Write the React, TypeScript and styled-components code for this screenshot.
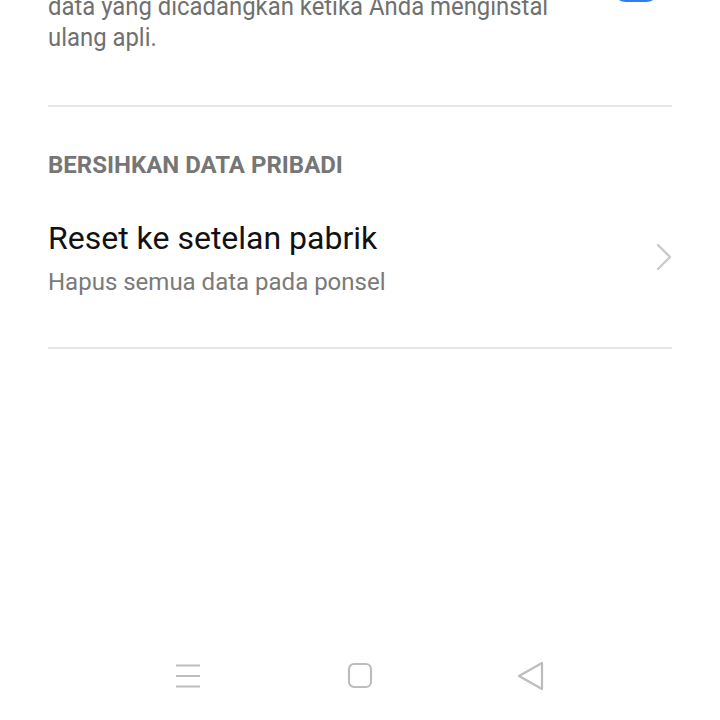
import React from 'react';
import styled, { createGlobalStyle } from 'styled-components';

const GlobalStyle = createGlobalStyle`
  html, body {
    margin: 0;
    padding: 0;
    background: #ffffff;
    font-family: Roboto, "Noto Sans", sans-serif;
    overflow: hidden;
  }
`;

const Screen = styled.div`
  width: 720px;
  height: 720px;
  display: flex;
  flex-direction: column;
  overflow: hidden;
`;

const Content = styled.div`
  flex: 1;
  display: flex;
  flex-direction: column;
  padding: 0 48px;
  margin-top: -40px;
`;

const ToggleRow = styled.div`
  display: flex;
  align-items: flex-start;
  justify-content: space-between;
  padding-bottom: 52px;
  border-bottom: 2px solid #e6e6e6;
`;

const Description = styled.p`
  margin: 0;
  font-size: 25px;
  line-height: 31px;
  color: #707070;
  white-space: nowrap;
  transform: scaleX(0.955);
  transform-origin: left center;
`;

const Toggle = styled.div`
  width: 48px;
  height: 28px;
  margin-top: 14px;
  margin-right: 12px;
  border-radius: 14px;
  background: #2f7cf6;
`;

const SectionHeader = styled.div`
  font-size: 24px;
  font-weight: 700;
  color: #767676;
  padding-top: 44px;
  line-height: 28px;
`;

const Item = styled.div`
  display: flex;
  align-items: center;
  justify-content: space-between;
  padding: 39px 0 51px;
  border-bottom: 2px solid #e6e6e6;
`;

const ItemText = styled.div`
  display: flex;
  flex-direction: column;
  gap: 10px;
`;

const ItemTitle = styled.div`
  font-size: 32px;
  line-height: 40px;
  color: #111111;
`;

const ItemSub = styled.div`
  font-size: 24px;
  line-height: 28px;
  color: #7a7a7a;
`;

const NavBar = styled.div`
  height: 88px;
  display: flex;
  align-items: center;
  justify-content: center;
  gap: 148px;
`;

const NavIcon = styled.svg`
  width: 24px;
  height: 26px;
  display: block;
  overflow: visible;
`;

export default function App() {
  return (
    <>
      <GlobalStyle />
      <Screen>
        <Content>
          <ToggleRow>
            <Description>
              Memulihkan pengaturan dan<br />
              data yang dicadangkan ketika Anda menginstal<br />
              ulang apli.
            </Description>
            <Toggle />
          </ToggleRow>
          <SectionHeader>BERSIHKAN DATA PRIBADI</SectionHeader>
          <Item>
            <ItemText>
              <ItemTitle>Reset ke setelan pabrik</ItemTitle>
              <ItemSub>Hapus semua data pada ponsel</ItemSub>
            </ItemText>
            <svg width="16" height="28" viewBox="0 0 16 28" fill="none">
              <path d="M2 2 L14 14 L2 26" stroke="#cacaca" strokeWidth="2.4" strokeLinecap="round" strokeLinejoin="round" />
            </svg>
          </Item>
        </Content>
        <NavBar>
          <NavIcon viewBox="0 0 24 26" fill="none">
            <path d="M0 2.5 H24 M0 13 H24 M0 23.5 H24" stroke="#bdbdbd" strokeWidth="2" />
          </NavIcon>
          <NavIcon viewBox="0 0 24 26" fill="none">
            <rect x="1" y="1" width="22" height="23" rx="5" stroke="#bdbdbd" strokeWidth="2.2" />
          </NavIcon>
          <NavIcon viewBox="0 0 24 26" fill="none">
            <path d="M22 0 L22 26 L-1 13 Z" stroke="#bdbdbd" strokeWidth="2.2" strokeLinejoin="round" />
          </NavIcon>
        </NavBar>
      </Screen>
    </>
  );
}
